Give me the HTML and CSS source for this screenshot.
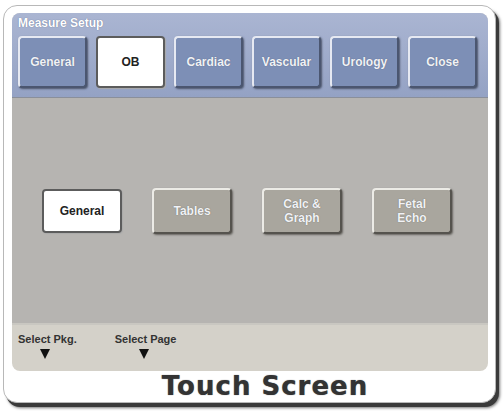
FILE: index.html
```html
<!DOCTYPE html>
<html lang="en">
<head>
  <meta charset="UTF-8" />
  <title>Measure Setup</title>
  <link rel="stylesheet" href="styles.css">
</head>
<body>

  <div class="device">
    <div class="screen">
      <div class="header">
        <div class="title">Measure Setup</div>
        <div class="tabs">
          <button class="tab">General</button>
          <button class="tab active">OB</button>
          <button class="tab">Cardiac</button>
          <button class="tab">Vascular</button>
          <button class="tab">Urology</button>
          <button class="tab">Close</button>
        </div>
      </div>

      <div class="body">
        <button class="page active">General</button>
        <button class="page">Tables</button>
        <button class="page">Calc &amp;<br>Graph</button>
        <button class="page">Fetal<br>Echo</button>
      </div>

      <div class="footer">
        <div class="knob">Select Pkg.<span class="arrow"></span></div>
        <div class="knob">Select Page<span class="arrow"></span></div>
      </div>
    </div>
    <div class="caption">Touch Screen</div>
  </div>

</body>
</html>
```

FILE: styles.css
```css
body {
  margin: 0;
  padding: 5px 6px 8px 3px;
  background: #ffffff;
  font-family: "Liberation Sans", Arial, sans-serif;
}
.device {
  width: 493px;
  height: 398px;
  box-sizing: border-box;
  background: #ffffff;
  border: 1px solid #b8b8b8;
  border-radius: 14px;
  box-shadow: 3px 4px 0 #3a3a3a, 4px 5px 3px #777;
  padding: 7px 7px 0 8px;
}
.screen {
  border-radius: 8px;
  overflow: hidden;
  background: #d4d1c9;
}
.header {
  height: 85px;
  box-sizing: border-box;
  background: linear-gradient(#aab5d2, #94a2c4);
  padding: 3px 0 0 6px;
  border-bottom: 1px solid #8a8f9a;
}
.title {
  color: #ffffff;
  font-weight: bold;
  font-size: 12px;
  text-shadow: 0 0 1px #5b6788;
}
.tabs {
  display: flex;
  gap: 9px;
  margin-top: 6px;
}
.tab, .page {
  font-family: inherit;
  font-weight: bold;
  font-size: 12px;
  color: #f1f2f6;
  border-radius: 4px;
  padding: 0;
  cursor: pointer;
}
.tab {
  width: 69px;
  height: 52px;
  background: #7d8fb6;
  border: 2px solid #e6e9f2;
  border-right-color: #4b5670;
  border-bottom-color: #4b5670;
  box-shadow: 1px 1px 2px #4c556b;
  text-shadow: 0 0 1px #505c78;
}
.tab.active, .page.active {
  background: #ffffff;
  color: #222;
  text-shadow: none;
  border: 2px solid #5c5c5c;
  box-shadow: 1px 1px 1px #aaa;
}
.body {
  height: 225px;
  background: #b6b4b1;
  display: flex;
  align-items: center;
  padding-left: 30px;
  gap: 30px;
}
.page {
  width: 80px;
  height: 46px;
  background: #a9a69e;
  border: 2px solid #ecebe6;
  border-right-color: #55534e;
  border-bottom-color: #55534e;
  box-shadow: 1px 1px 2px #66645f;
  text-shadow: 0 0 1px #66645f;
  line-height: 14px;
}
.page.active {
  height: 44px;
}
.footer {
  height: 48px;
  border-top: 2px solid #c9c7c1;
  display: flex;
  gap: 38px;
  padding: 8px 0 0 6px;
  box-sizing: border-box;
}
.knob {
  font-size: 11px;
  font-weight: bold;
  color: #333;
  display: flex;
  flex-direction: column;
  align-items: center;
}
.arrow {
  margin-top: 4px;
  margin-right: 4px;
  width: 0;
  height: 0;
  border-left: 5px solid transparent;
  border-right: 5px solid transparent;
  border-top: 10px solid #111;
}
.caption {
  text-align: center;
  padding-left: 30px;
  font-family: "DejaVu Sans", sans-serif;
  font-weight: bold;
  font-size: 26px;
  line-height: 28px;
  color: #333;
  margin-top: 1px;
  letter-spacing: 1px;
  text-shadow: 0 0 1px #666;
}
```
